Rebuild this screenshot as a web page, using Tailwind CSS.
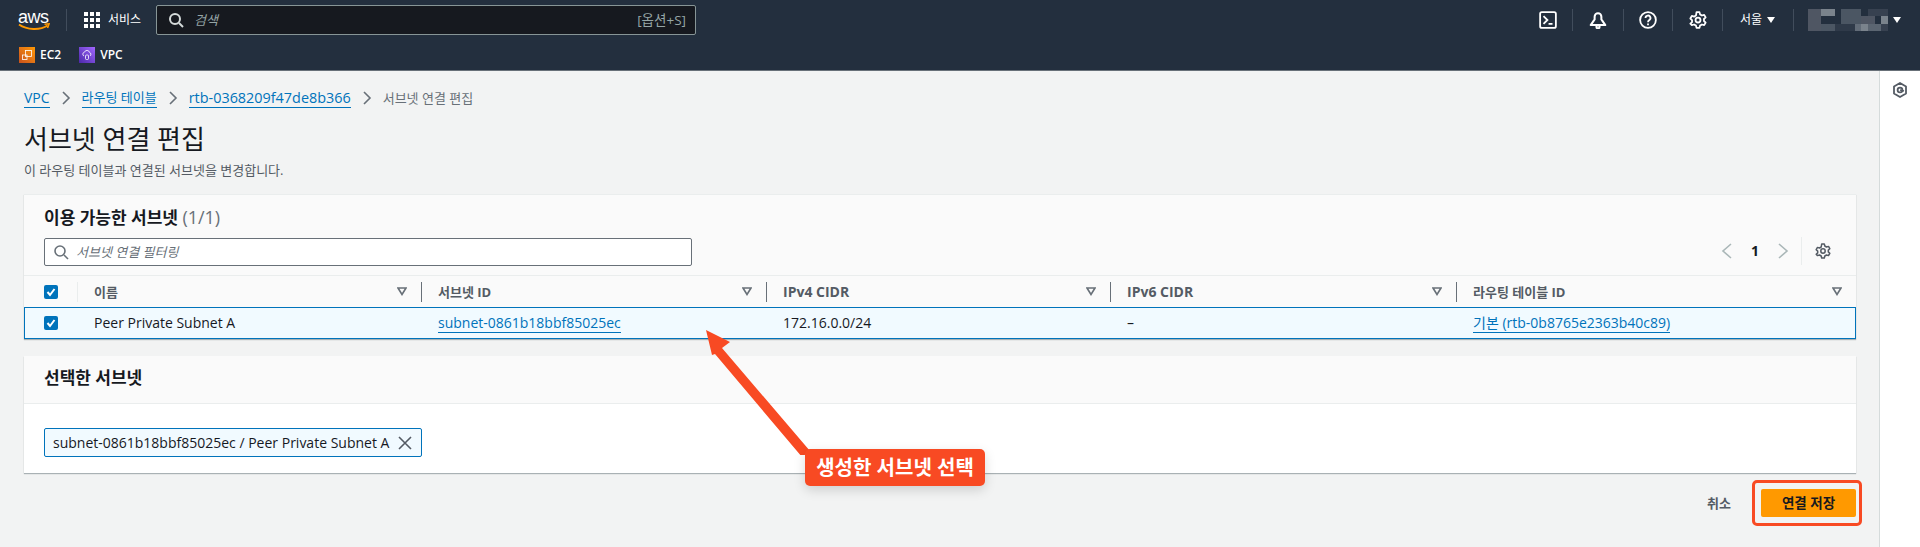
<!DOCTYPE html>
<html lang="ko">
  <head>
    <meta charset="UTF-8" />
    <title>서브넷 연결 편집</title>
    <script src="https://cdn.jsdelivr.net/npm/@tailwindcss/browser@4"></script>
  </head>
  <body class="relative h-[547px] overflow-hidden bg-[#f2f3f3] text-[14px] leading-[20px] text-[#16191f] font-['Open_Sans','Noto_Sans_CJK_KR',sans-serif]">
    <!-- Top nav -->
    <header class="h-[71px] bg-[#232f3e] border-b border-[#687078] text-white">
      <div class="h-[40px] flex items-center">
        <div class="w-[66px] pl-[18px] shrink-0">
          <div class="relative w-[32px] h-[24px]">
            <span class="block text-[18px] leading-[18px] tracking-[-0.5px] font-['Liberation_Sans',sans-serif]">aws</span>
            <svg class="absolute left-0 top-[14px]" width="32" height="10" viewBox="0 0 32 10" fill="none">
              <path d="M1 2.5C9 8 22 8.5 29.5 3.5" stroke="#ff9900" stroke-width="2"/>
              <path d="M26.5 2.2L31 1.8L29.5 6" stroke="#ff9900" stroke-width="1.6"/>
            </svg>
          </div>
        </div>
        <div class="w-px h-[22px] bg-[#414d5c] shrink-0"></div>
        <div class="flex items-center pl-[17px] w-[89px] shrink-0">
          <div class="grid grid-cols-3 gap-[2px] w-[16px]">
            <i class="w-[4px] h-[4px] bg-white"></i><i class="w-[4px] h-[4px] bg-white"></i><i class="w-[4px] h-[4px] bg-white"></i>
            <i class="w-[4px] h-[4px] bg-white"></i><i class="w-[4px] h-[4px] bg-white"></i><i class="w-[4px] h-[4px] bg-white"></i>
            <i class="w-[4px] h-[4px] bg-white"></i><i class="w-[4px] h-[4px] bg-white"></i><i class="w-[4px] h-[4px] bg-white"></i>
          </div>
          <span class="ml-[8px] text-[12px] whitespace-nowrap">서비스</span>
        </div>
        <div class="w-[540px] h-[30px] shrink-0 flex items-center bg-[#16191f] border border-[#879596] rounded-[2px] pl-[11px] pr-[9px]">
          <svg width="16" height="16" viewBox="0 0 16 16" fill="none" stroke="#d5dbdb" stroke-width="2"><circle cx="7" cy="7" r="5"/><path d="M11 11l4 4"/></svg>
          <span class="ml-[10px] text-[13px] italic text-[#95a5a6]">검색</span>
          <span class="ml-auto text-[13.5px] text-[#95a5a6]">[옵션+S]</span>
        </div>
        <div class="ml-auto flex items-center h-[24px]">
          <div class="w-[49px] flex justify-center">
            <svg width="18" height="18" viewBox="0 0 16 16" fill="none" stroke="#fff" stroke-width="1.6"><rect x="1" y="1" width="14" height="14" rx="1.5"/><path d="M4 4.5L7.5 8L4 11.5M8.5 11.5H12"/></svg>
          </div>
          <div class="w-px h-[22px] bg-[#414d5c]"></div>
          <div class="w-[50px] flex justify-center">
            <svg width="18" height="18" viewBox="0 0 16 16" fill="none" stroke="#fff" stroke-width="1.8"><path d="M1.5 12.5L5 7.5V5a3 3 0 0 1 6 0v2.5l3.5 5z" stroke-linejoin="round"/><circle cx="8" cy="14" r="1.4"/></svg>
          </div>
          <div class="w-px h-[22px] bg-[#414d5c]"></div>
          <div class="w-[48px] flex justify-center">
            <svg width="18" height="18" viewBox="0 0 16 16" fill="none" stroke="#fff" stroke-width="1.6"><circle cx="8" cy="8" r="7"/><path d="M5.8 6.2a2.2 2.2 0 1 1 3.3 1.9C8.4 8.5 8 9 8 10"/><path d="M8 11v1.6"/></svg>
          </div>
          <div class="w-px h-[22px] bg-[#414d5c]"></div>
          <div class="w-[49px] flex justify-center">
            <svg width="18" height="18" viewBox="0 0 16 16" fill="none" stroke="#fff" stroke-width="1.6"><circle cx="8" cy="8" r="2.2"/><path d="M6.7 1h2.6l.5 2 1.7 1 2-.6 1.3 2.3-1.5 1.4v1.8l1.5 1.4-1.3 2.3-2-.6-1.7 1-.5 2H6.7l-.5-2-1.7-1-2 .6L1.2 11.3l1.5-1.4V8.1L1.2 6.7l1.3-2.3 2 .6 1.7-1z" stroke-linejoin="round"/></svg>
          </div>
          <div class="w-px h-[22px] bg-[#414d5c]"></div>
          <div class="w-[70px] flex items-center pl-[17px]">
            <span class="text-[12px]">서울</span>
            <span class="ml-[5px] w-0 h-0 border-x-[4px] border-x-transparent border-t-[6px] border-t-white"></span>
          </div>
          <div class="w-px h-[22px] bg-[#414d5c]"></div>
          <div class="w-[126px] pl-[14px] flex items-center">
            <div class="grid grid-cols-[repeat(12,6.67px)] grid-rows-[repeat(3,7.33px)]">
              <i class="bg-[#4f5663]"></i><i class="bg-[#4f5663]"></i><i class="bg-[#7a838c]"></i><i class="bg-[#7a838c]"></i><i class="bg-[#232f3e]"></i><i class="bg-[#4b5663]"></i><i class="bg-[#4b5663]"></i><i class="bg-[#4b5663]"></i><i class="bg-[#232f3e]"></i><i class="bg-[#374150]"></i><i class="bg-[#374150]"></i><i class="bg-[#374150]"></i>
              <i class="bg-[#4f5663]"></i><i class="bg-[#4f5663]"></i><i class="bg-[#232f3e]"></i><i class="bg-[#232f3e]"></i><i class="bg-[#232f3e]"></i><i class="bg-[#4b5663]"></i><i class="bg-[#4b5663]"></i><i class="bg-[#4b5663]"></i><i class="bg-[#4f5663]"></i><i class="bg-[#4f5663]"></i><i class="bg-[#232f3e]"></i><i class="bg-[#7a838c]"></i>
              <i class="bg-[#4f5663]"></i><i class="bg-[#4f5663]"></i><i class="bg-[#4b5663]"></i><i class="bg-[#4b5663]"></i><i class="bg-[#2f3a49]"></i><i class="bg-[#2f3a49]"></i><i class="bg-[#2f3a49]"></i><i class="bg-[#626c78]"></i><i class="bg-[#7a838c]"></i><i class="bg-[#5b6571]"></i><i class="bg-[#5b6571]"></i><i class="bg-[#374150]"></i>
            </div>
            <span class="ml-[5px] w-0 h-0 border-x-[4px] border-x-transparent border-t-[6px] border-t-white"></span>
          </div>
        </div>
      </div>
      <div class="h-[30px] flex items-center pl-[19px] text-[12px]">
        <div class="w-[16px] h-[16px] bg-gradient-to-tr from-[#c8511b] to-[#ff9900] flex items-center justify-center">
          <svg width="12" height="12" viewBox="0 0 12 12" fill="none" stroke="#fff" stroke-width="0.8"><rect x="4.5" y="1.5" width="6" height="6"/><rect x="1.5" y="6" width="4.5" height="4.5"/></svg>
        </div>
        <span class="ml-[5px] font-semibold">EC2</span>
        <div class="ml-[18px] w-[16px] h-[16px] bg-gradient-to-tr from-[#4d27aa] to-[#a166ff] flex items-center justify-center">
          <svg width="12" height="12" viewBox="0 0 12 12" fill="none" stroke="#fff" stroke-width="0.8"><path d="M3 7a2 2 0 0 1 .5-3.8A2.6 2.6 0 0 1 8.5 3.4 2 2 0 0 1 9 7"/><rect x="4.5" y="6" width="3" height="4.5" rx="1"/></svg>
        </div>
        <span class="ml-[5px] font-semibold">VPC</span>
      </div>
    </header>

    <div class="flex h-[476px]">
      <main class="flex-1 min-w-0 pl-[24px] pr-[23px] pt-[17px]">
        <!-- Breadcrumb -->
        <nav class="flex items-center h-[20px] text-[14px] whitespace-nowrap">
          <a class="text-[#0073bb] border-b border-[#0073bb] leading-[19px]">VPC</a>
          <svg class="mx-[9px]" width="14" height="16" viewBox="0 0 14 16" fill="none" stroke="#687078" stroke-width="1.6"><path d="M4 2l6 6-6 6"/></svg>
          <a class="text-[#0073bb] border-b border-[#0073bb] leading-[19px] text-[13px]">라우팅 테이블</a>
          <svg class="mx-[9px]" width="14" height="16" viewBox="0 0 14 16" fill="none" stroke="#687078" stroke-width="1.6"><path d="M4 2l6 6-6 6"/></svg>
          <a class="text-[#0073bb] border-b border-[#0073bb] leading-[19px] text-[14.4px]">rtb-0368209f47de8b366</a>
          <svg class="mx-[9px]" width="14" height="16" viewBox="0 0 14 16" fill="none" stroke="#687078" stroke-width="1.6"><path d="M4 2l6 6-6 6"/></svg>
          <span class="text-[#687078] text-[13px]">서브넷 연결 편집</span>
        </nav>
        <h1 class="mt-[14px] text-[26px] leading-[34px] font-normal">서브넷 연결 편집</h1>
        <p class="mt-[5px] text-[13px] leading-[18px] text-[#545b64]">이 라우팅 테이블과 연결된 서브넷을 변경합니다.</p>

        <!-- Available subnets -->
        <section class="mt-[15px] h-[145px] bg-[#fafafa] border-t border-[#eaeded] shadow-[0_1px_1px_0_rgba(0,28,36,0.3)]">
          <div class="h-[81px] px-[20px] pt-[11px] relative border-b border-[#eaeded]">
            <h2 class="text-[17px] leading-[22px] font-bold">이용 가능한 서브넷 <span class="font-normal text-[18px] text-[#687078]">(1/1)</span></h2>
            <div class="mt-[9px] w-[648px] h-[28px] bg-white border border-[#687078] rounded-[2px] flex items-center pl-[8px]">
              <svg width="16" height="16" viewBox="0 0 16 16" fill="none" stroke="#687078" stroke-width="1.6"><circle cx="7" cy="7" r="5"/><path d="M11 11l4 4"/></svg>
              <span class="ml-[7px] text-[13px] italic text-[#687078]">서브넷 연결 필터링</span>
            </div>
            <div class="absolute right-[25px] top-[44px] flex items-center h-[24px]">
              <svg width="16" height="18" viewBox="0 0 16 18" fill="none" stroke="#aab7b8" stroke-width="1.6"><path d="M12 2L4 9l8 7"/></svg>
              <span class="w-[40px] text-center font-bold text-[14px]">1</span>
              <svg width="16" height="18" viewBox="0 0 16 18" fill="none" stroke="#aab7b8" stroke-width="1.6"><path d="M4 2l8 7-8 7"/></svg>
              <div class="ml-[10px] w-px h-[28px] bg-[#eaeded]"></div>
              <svg class="ml-[13px]" width="16" height="16" viewBox="0 0 16 16" fill="none" stroke="#545b64" stroke-width="1.5"><circle cx="8" cy="8" r="2.2"/><path d="M6.7 1h2.6l.5 2 1.7 1 2-.6 1.3 2.3-1.5 1.4v1.8l1.5 1.4-1.3 2.3-2-.6-1.7 1-.5 2H6.7l-.5-2-1.7-1-2 .6L1.2 11.3l1.5-1.4V8.1L1.2 6.7l1.3-2.3 2 .6 1.7-1z" stroke-linejoin="round"/></svg>
            </div>
          </div>
          <div class="grid grid-cols-[54px_344px_345px_344px_346px_399px] h-[31px] items-center text-[13px] font-bold text-[#545b64]">
            <div class="h-[20px] pl-[20px] border-r border-[#eaeded] flex items-center">
              <span class="w-[14px] h-[14px] bg-[#0073bb] rounded-[2px] flex items-center justify-center">
                <svg width="10" height="10" viewBox="0 0 10 10" fill="none" stroke="#fff" stroke-width="2"><path d="M1.5 5l2.5 3 4.5-6"/></svg>
              </span>
            </div>
            <div class="h-[20px] pl-[16px] pr-[14px] border-r border-[#687078] flex items-center justify-between">이름<svg width="10" height="9" viewBox="0 0 10 9" fill="none" stroke="#687078" stroke-width="1.6"><path d="M1 1h8L5 7.5z"/></svg></div>
            <div class="h-[20px] pl-[16px] pr-[14px] border-r border-[#687078] flex items-center justify-between">서브넷 ID<svg width="10" height="9" viewBox="0 0 10 9" fill="none" stroke="#687078" stroke-width="1.6"><path d="M1 1h8L5 7.5z"/></svg></div>
            <div class="h-[20px] pl-[16px] pr-[14px] border-r border-[#687078] flex items-center justify-between text-[14px]">IPv4 CIDR<svg width="10" height="9" viewBox="0 0 10 9" fill="none" stroke="#687078" stroke-width="1.6"><path d="M1 1h8L5 7.5z"/></svg></div>
            <div class="h-[20px] pl-[16px] pr-[14px] border-r border-[#687078] flex items-center justify-between text-[14px]">IPv6 CIDR<svg width="10" height="9" viewBox="0 0 10 9" fill="none" stroke="#687078" stroke-width="1.6"><path d="M1 1h8L5 7.5z"/></svg></div>
            <div class="h-[20px] pl-[16px] pr-[14px] flex items-center justify-between">라우팅 테이블 ID<svg width="10" height="9" viewBox="0 0 10 9" fill="none" stroke="#687078" stroke-width="1.6"><path d="M1 1h8L5 7.5z"/></svg></div>
          </div>
          <div class="grid grid-cols-[53px_344px_345px_344px_346px_398px] h-[32px] items-center bg-[#f1faff] border border-[#0073bb] text-[14px]">
            <div class="pl-[19px] flex items-center">
              <span class="w-[14px] h-[14px] bg-[#0073bb] rounded-[2px] flex items-center justify-center">
                <svg width="10" height="10" viewBox="0 0 10 10" fill="none" stroke="#fff" stroke-width="2"><path d="M1.5 5l2.5 3 4.5-6"/></svg>
              </span>
            </div>
            <div class="pl-[16px]">Peer Private Subnet A</div>
            <div class="pl-[16px]"><a class="text-[#0073bb] border-b border-[#0073bb]">subnet-0861b18bbf85025ec</a></div>
            <div class="pl-[16px]">172.16.0.0/24</div>
            <div class="pl-[16px]">–</div>
            <div class="pl-[16px]"><a class="text-[#0073bb] border-b border-[#0073bb]">기본 (rtb-0b8765e2363b40c89)</a></div>
          </div>
        </section>

        <!-- Selected subnets -->
        <section class="mt-[17px] h-[117px] bg-white shadow-[0_1px_1px_0_rgba(0,28,36,0.3)]">
          <div class="h-[48px] bg-[#fafafa] border-b border-[#eaeded] px-[20px] pb-[3px] flex items-center">
            <h2 class="text-[17px] font-bold">선택한 서브넷</h2>
          </div>
          <div class="px-[20px] pt-[24px]">
            <div class="w-[378px] h-[29px] bg-[#f1faff] border border-[#0073bb] rounded-[2px] flex items-center pl-[8px] text-[14px] whitespace-nowrap">
              subnet-0861b18bbf85025ec / Peer Private Subnet A
              <svg class="ml-auto mr-[8px]" width="16" height="16" viewBox="0 0 16 16" fill="none" stroke="#545b64" stroke-width="1.6"><path d="M2 2l12 12M14 2L2 14"/></svg>
            </div>
          </div>
        </section>

        <div class="flex justify-end items-center mt-[16px] h-[28px]">
          <span class="text-[13px] font-bold text-[#545b64]">취소</span>
          <button class="ml-[30px] w-[95px] h-[28px] bg-[#ff9900] rounded-[2px] text-[13.5px] font-bold text-[#16191f]">연결 저장</button>
        </div>
      </main>
      <aside class="w-[41px] shrink-0 bg-white border-l border-[#d5dbdb] flex justify-center pt-[11px]">
        <svg width="16" height="16" viewBox="0 0 16 16" fill="none" stroke="#545b64" stroke-width="1.8"><path d="M8 1l6 3.5v7L8 15l-6-3.5v-7z" stroke-linejoin="round"/><circle cx="8" cy="8" r="2.4"/><path d="M8 8l4 1"/></svg>
      </aside>
    </div>

    <!-- Annotations over the page -->
    <svg class="absolute left-[700px] top-[325px]" width="120" height="130" viewBox="0 0 120 130" fill="none">
      <path d="M6 5L30 17L22 23L110 126L102 132L15 29L12 30z" fill="#f84a23"/>
    </svg>
    <div class="absolute left-[805px] top-[449px] w-[180px] h-[37px] bg-[#f84a23] rounded-[5px] shadow-[0_4px_12px_rgba(0,0,0,0.15)] flex items-center justify-center text-white text-[20px] font-bold whitespace-nowrap">생성한 서브넷 선택</div>
    <div class="absolute left-[1752px] top-[480px] w-[110px] h-[46px] border-[3px] border-[#f84a23] rounded-[5px]"></div>
  </body>
</html>
